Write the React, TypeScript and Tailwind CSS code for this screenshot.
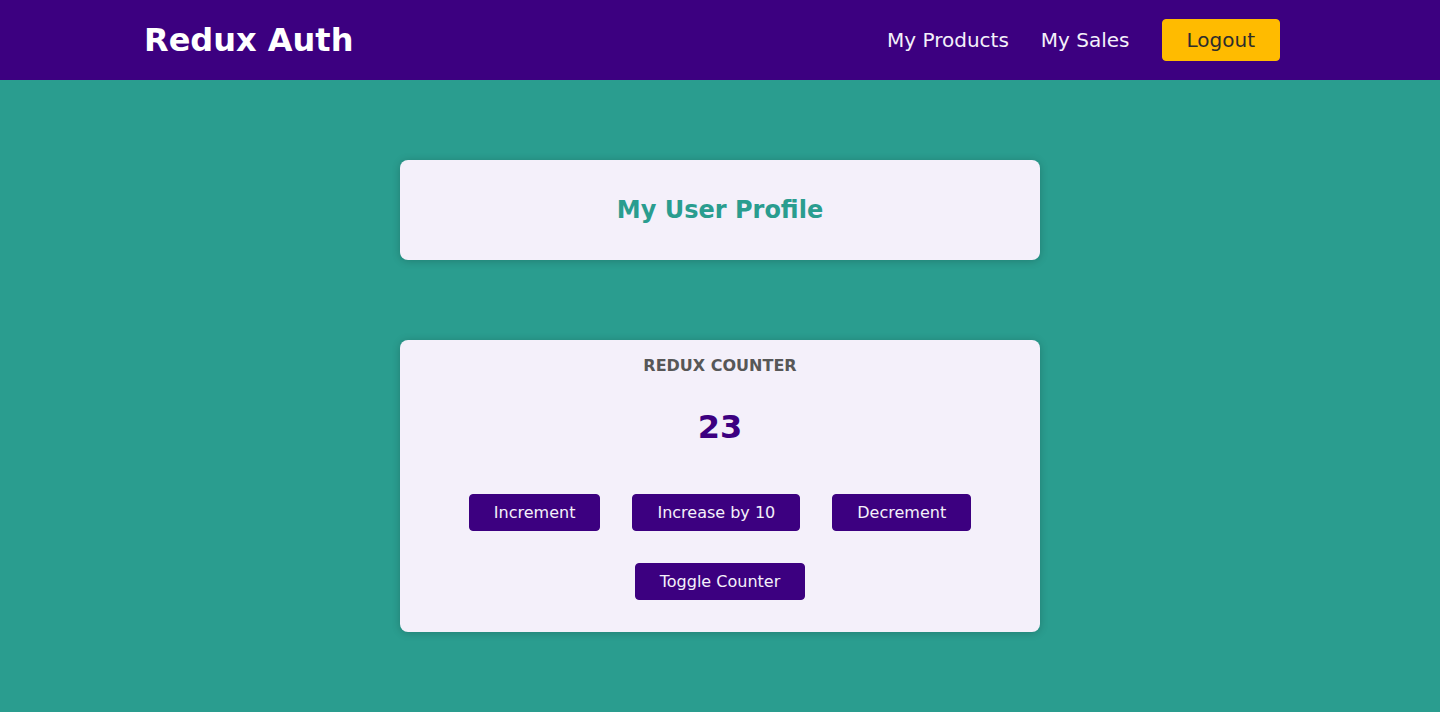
export default function App() {
    const btn =
        'rounded-[4px] border border-[#3c0080] bg-[#3c0080] px-6 py-2 text-base leading-[19px] text-[#f4f0fa]'

    return (
        <div className="min-h-[712px] bg-[#2a9d8f] font-['DejaVu_Sans',sans-serif]">
            <header className="flex h-20 items-center justify-between bg-[#3c0080] px-[144px]">
                <div className="text-[32px] font-bold leading-none text-white">Redux Auth</div>
                <nav className="flex items-center">
                    <a className="mx-4 text-xl text-[#f4f0fa]">My Products</a>
                    <a className="mx-4 text-xl text-[#f4f0fa]">My Sales</a>
                    <button className="mx-4 h-[42px] rounded-[4px] border border-[#ffbb00] bg-[#ffbb00] px-6 text-xl leading-[23px] text-[#2c2c2c]">
                        Logout
                    </button>
                </nav>
            </header>

            <main className="flex flex-col items-center pt-20">
                <section className="flex h-[100px] w-[640px] items-center justify-center rounded-lg bg-[#f4f0fa] shadow-[0_1px_8px_rgba(0,0,0,0.2)]">
                    <h2 className="text-2xl font-bold leading-none text-[#2a9d8f]">My User Profile</h2>
                </section>

                <section className="mt-20 flex w-[640px] flex-col items-center rounded-lg bg-[#f4f0fa] pt-4 pb-8 shadow-[0_1px_8px_rgba(0,0,0,0.2)]">
                    <h1 className="text-base font-bold uppercase leading-[19px] text-[#575757]">Redux Counter</h1>
                    <div className="mt-[33px] text-[32px] font-bold leading-[38px] text-[#3c0080]">23</div>
                    <div className="mt-12 flex gap-8">
                        <button className={btn}>Increment</button>
                        <button className={btn}>Increase by 10</button>
                        <button className={btn}>Decrement</button>
                    </div>
                    <button className={'mt-8 ' + btn}>Toggle Counter</button>
                </section>
            </main>
        </div>
    )
}
